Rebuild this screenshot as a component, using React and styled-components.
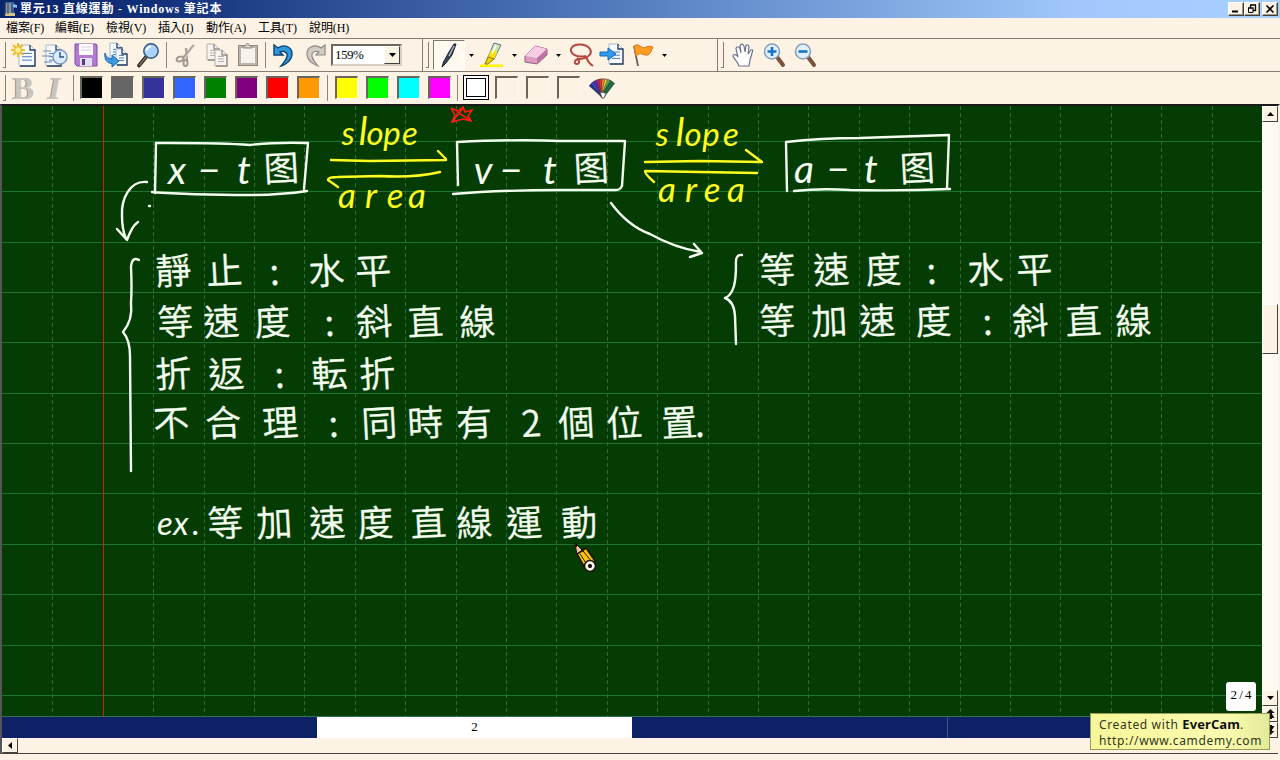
import React from "react";
import styled, { createGlobalStyle } from "styled-components";

const Global = createGlobalStyle`
  body { margin: 0; background: #fdf3e4; overflow: hidden; }
  * { box-sizing: border-box; }
`;

const uiFont = `"Liberation Serif", "Noto Sans CJK TC", serif`;

const Window = styled.div`
  position: relative;
  width: 1280px;
  height: 760px;
  display: flex;
  flex-direction: column;
  background: #fdf3e4;
  font-family: ${uiFont};
  font-size: 12px;
  color: #000;
  overflow: hidden;
`;

const TitleBar = styled.header`
  height: 18px;
  flex: none;
  display: flex;
  align-items: center;
  padding: 0 2px 1px 3px;
  background: linear-gradient(90deg, #0a246a 0%, #12307a 12%, #5a84c4 52%, #a0c8fc 84%, #a8d0ff 100%);
  color: #fff;
`;

const Title = styled.h1`
  flex: 1;
  margin: 1px 0 0 2px;
  font-size: 12px;
  line-height: 17px;
  font-weight: bold;
  letter-spacing: 0.8px;
  white-space: pre;
`;

const CaptionButton = styled.button`
  width: 16px;
  height: 14px;
  padding: 0;
  margin-left: ${(p) => (p.$gap ? "2px" : "0")};
  display: flex;
  align-items: center;
  justify-content: center;
  background: #fdf3e4;
  border: 1px solid;
  border-color: #fff #404040 #404040 #fff;
  box-shadow: inset -1px -1px 0 #9d968a;
`;

const MenuBar = styled.nav`
  height: 20px;
  flex: none;
  display: flex;
  align-items: center;
  padding-left: 6px;
`;

const MenuItem = styled.span`
  width: ${(p) => p.$w}px;
  font-size: 12px;
  line-height: 20px;
  letter-spacing: -0.1px;
  white-space: nowrap;
`;

const Bar = styled.div`
  height: 33px;
  flex: none;
  display: flex;
  align-items: stretch;
  border-top: 1px solid #857d74;
`;

const Band = styled.div`
  width: ${(p) => p.$w || "auto"};
  flex: ${(p) => (p.$w ? "none" : 1)};
  display: flex;
  align-items: center;
  padding-left: 3px;
  border-right: ${(p) => (p.$edge ? "1px solid #857d74" : "0")};
`;

const Grip = styled.i`
  width: 3px;
  height: 26px;
  flex: none;
  margin-right: ${(p) => p.$after || 2}px;
  border-right: 1px solid #857d74;
  border-bottom: 1px solid #857d74;
`;

const Divider = styled.i`
  width: 1px;
  height: 26px;
  flex: none;
  margin: 0 ${(p) => p.$after ?? 3}px 0 ${(p) => p.$before ?? 3}px;
  background: #8d857b;
`;

const Tool = styled.button`
  width: ${(p) => p.$w || 31}px;
  height: 30px;
  flex: none;
  padding: 0;
  display: flex;
  align-items: center;
  justify-content: center;
  background: ${(p) => (p.$pressed ? "#fff9f0" : "none")};
  border: ${(p) => (p.$pressed ? "1px solid" : "0")};
  border-color: #80786e #fff #fff #80786e;
`;

const Zoom = styled.div`
  width: 71px;
  height: 22px;
  margin: 0 0 1px 1px;
  display: flex;
  justify-content: space-between;
  background: #fff;
  border: 2px solid;
  border-color: #6f6860 #d9d0c3 #d9d0c3 #6f6860;
  font-size: 13px;
  line-height: 18px;
  letter-spacing: -0.5px;
  padding-left: 2px;
`;

const ZoomArrow = styled.span`
  width: 16px;
  display: flex;
  align-items: center;
  justify-content: center;
  background: #fdf3e4;
  border: 1px solid;
  border-color: #fff #404040 #404040 #fff;
`;

const Letter = styled.b`
  width: ${(p) => p.$w}px;
  text-align: center;
  font-size: 32px;
  line-height: 30px;
  font-style: ${(p) => (p.$italic ? "italic" : "normal")};
  color: #c9c5be;
  text-shadow: -1px 0 #96918a;
`;

const PaletteRow = styled.div`
  display: flex;
  align-items: center;
  padding-left: 3px;
`;

const Swatch = styled.button`
  width: 23px;
  height: 23px;
  flex: none;
  margin: 0 8px 2px 0;
  padding: 0;
  background: ${(p) => p.$color};
  border: solid;
  border-width: 2px 1px 1px 2px;
  border-color: #6b645c #fff8ec #fff8ec #6b645c;
`;

const PickedSwatch = styled.button`
  width: 26px;
  height: 25px;
  flex: none;
  margin: 0 6px 1px 0;
  padding: 0;
  background: #fff;
  border: 4px double #000;
`;

const Workspace = styled.main`
  height: 650px;
  flex: none;
  display: grid;
  grid-template-columns: 1260px 16px;
  grid-template-rows: 611px 21px 16px;
  border: solid;
  border-width: 2px 2px 0 2px;
  border-color: #1a1a1a #fdf3e4 #555 #555;
`;

const Board = styled.svg`
  display: block;
  width: 1260px;
  height: 611px;
  background: #043c04;
`;

const Pages = styled.div`
  display: flex;
  background: #0e2167;
`;

const PageTab = styled.div`
  width: ${(p) => p.$w}px;
  background: ${(p) => (p.$active ? "#fff" : "#0e2167")};
  border-right: ${(p) => (p.$line ? "1px solid #3c5490" : "0")};
  text-align: center;
  line-height: 20px;
  font-size: 13px;
`;

const VScroll = styled.div`
  grid-column: 2;
  grid-row: 1 / 3;
  display: flex;
  flex-direction: column;
  background: #fffaf1;
`;

const HScroll = styled.div`
  grid-column: 1 / 3;
  display: flex;
  border-bottom: 1px solid #45413c;
`;

const ScrollKey = styled.button`
  width: 16px;
  height: ${(p) => p.$h || 16}px;
  flex: none;
  padding: 0;
  display: flex;
  align-items: center;
  justify-content: center;
  background: #fdf3e4;
  border: 1px solid;
  border-color: #fff #45413c #45413c #fff;
`;

const Track = styled.div`
  height: ${(p) => p.$h}px;
  flex: ${(p) => (p.$h ? "none" : 1)};
`;

const PageBadge = styled.div`
  position: absolute;
  left: 1226px;
  top: 682px;
  width: 30px;
  height: 29px;
  border-radius: 3px;
  background: #fff;
  text-align: center;
  font-size: 13px;
  line-height: 26px;
  word-spacing: -1px;
`;

const Watermark = styled.div`
  position: absolute;
  left: 1090px;
  top: 713px;
  width: 180px;
  height: 37px;
  padding: 3px 0 0 8px;
  background: linear-gradient(90deg, #f6f69a, #fbfbb0 75%, #e2ea98);
  border: 1px solid #9b9d55;
  color: #33361c;
  font-family: "Noto Sans", sans-serif;
  font-size: 12px;
  line-height: 15px;
  white-space: nowrap;
`;

const MarkLine = styled.div`
  height: 16px;
  letter-spacing: 0.65px;
  b { color: #111; font-size: 13px; letter-spacing: 0.1px; }
`;

const Ink = styled.text`
  font-family: ${(p) => (p.$latin ? `"Lato", "Noto Sans CJK SC", sans-serif` : `"Noto Sans CJK TC", "Noto Sans CJK JP", sans-serif`)};
  font-style: ${(p) => (p.$latin ? "italic" : "normal")};
  font-weight: ${(p) => (p.$latin ? 400 : 350)};
  font-size: ${(p) => p.$size || 36}px;
  fill: ${(p) => p.$color || "#f4fff0"};
  stroke: ${(p) => (p.$latin ? "none" : p.$color || "#f4fff0")};
  stroke-width: 0.35px;
  text-anchor: middle;
`;

const TallLetter = styled.tspan`
  font-size: 38px;
`;

const Arrow = ({ d = "down" }) => {
  const pts = { down: "0,0 7,0 3.5,4", up: "0,4 7,4 3.5,0", left: "4,0 4,7 0,3.5" }[d];
  return <svg width={d === "left" ? 4 : 7} height={d === "left" ? 7 : 4}><polygon points={pts} fill="#000" /></svg>;
};

const SmallArrow = () => <svg width="5" height="3"><polygon points="0,0 5,0 2.5,3" fill="#000" /></svg>;

const DoubleArrow = ({ up }) => (
  <svg width="9" height="10" viewBox="0 0 9 10">
    <g transform={up ? "" : "rotate(180 4.5 5)"}>
      <path d="M4.5 0L8.5 4H6V5L8.5 9H6V10H3V9H.5L3 5V4H.5z" fill="#111" />
    </g>
  </svg>
);

const Glyph = ({ children }) => <svg width="26" height="26" viewBox="0 0 26 26" fill="none">{children}</svg>;

const Sheet = ({ x = 0, y = 0, w = 14, h = 20, gray }) => (
  <g transform={`translate(${x} ${y})`}>
    <path d={`M0 0H${w - 5}L${w} 5V${h}H0z`} fill={gray ? "#f7f4ef" : "#f5faff"} stroke={gray ? "#b5afa7" : "#a9b9ce"} />
    <path d={`M${w - 5} 0V5H${w}V${h}H1`} stroke={gray ? "#928c84" : "#26395f"} strokeWidth="1.3" />
    <path d={`M3 ${h * 0.4}H${w - 3}M3 ${h * 0.56}H${w - 3}M3 ${h * 0.72}H${w - 3}`} stroke={gray ? "#b5afa7" : "#5479b8"} />
  </g>
);

const icons = {
  fresh: <Glyph><Sheet x={8} y={3} w={16} h={21} /><path d="M7 1V15M0 8H14M2 3L12 13M12 3L2 13" stroke="#f2bd22" strokeWidth="2" /><circle cx="7" cy="8" r="3.4" fill="#fff08a" stroke="#e7ae1a" /></Glyph>,
  history: <Glyph><Sheet x={4} y={3} w={15} h={21} /><path d="M1 9H9M0 14H9M2 20H10" stroke="#7289a8" /><circle cx="18" cy="15" r="7" fill="#dcecff" stroke="#7f9cc4" strokeWidth="1.6" /><path d="M18 10V15H22" stroke="#294a80" strokeWidth="1.4" /></Glyph>,
  save: <Glyph><path d="M2 2H23L24 3V24H4L2 22z" fill="#b47ad6" stroke="#7d4da6" /><path d="M6 2H20V13H6z" fill="#fff" /><path d="M8 5H18M8 8H18" stroke="#d5cade" /><path d="M7 16H19V24H7z" fill="#e4dfec" /><path d="M9 17H12V23H9z" fill="#5c3485" /></Glyph>,
  send: <Glyph><Sheet x={6} y={1} w={12} h={16} /><Sheet x={12} y={7} w={11} h={16} /><path d="M1 11C2 15 5 17 8 17V13L15 19L8 25V21.5C3 21.5 0 17 1 11z" fill="#3f9ae0" stroke="#176aac" /></Glyph>,
  find: <Glyph><path d="M11 15L4 23.5" stroke="#30261f" strokeWidth="3.6" strokeLinecap="round" /><path d="M11 15L4 23.5" stroke="#8b7a6b" strokeWidth="1.2" /><circle cx="16" cy="9" r="7.2" fill="#a9d3fa" stroke="#37557d" strokeWidth="1.5" /><path d="M11.5 9A5 5 0 0 1 16 4.5" stroke="#fff" strokeWidth="2" /></Glyph>,
  cut: <Glyph><path d="M21 3L10 16M13 6L14 19" stroke="#aaa49c" strokeWidth="2.4" /><path d="M22 3L12 16" stroke="#e2ddd5" /><ellipse cx="7" cy="17" rx="3.5" ry="2.3" stroke="#9f9991" strokeWidth="2" transform="rotate(-20 7 17)" /><ellipse cx="12.5" cy="21" rx="2" ry="3" stroke="#9f9991" strokeWidth="2" /></Glyph>,
  copy: <Glyph><Sheet x={3} y={2} w={12} h={16} gray /><Sheet x={11} y={8} w={12} h={16} gray /></Glyph>,
  paste: <Glyph><rect x="3.5" y="3.5" width="19" height="20" fill="#bcb6ad" stroke="#8f8981" /><rect x="6" y="6" width="14" height="15" fill="#f6f3ee" /><path d="M8 6V4H10L12.5 1L15 4H17V6z" fill="#d3cec6" stroke="#8f8981" /></Glyph>,
  undo: <Glyph><path d="M7 6C14 1 22 6 21 13C20 19 16 22 10 24C14 19 17 16 16 12C15 9 11 9 9 10L12 13L3 13L3 3L7 6z" fill="#2f97dc" stroke="#0b4374" strokeWidth="1.4" /></Glyph>,
  redo: <Glyph><path d="M19 6C12 1 4 6 5 13C6 19 10 22 16 24C12 19 9 16 10 12C11 9 15 9 17 10L14 13L23 13L23 3L19 6z" fill="#d1ccc5" stroke="#8f8982" strokeWidth="1.2" /></Glyph>,
  pen: <Glyph><path d="M20 2L16 13L10 21L6 25L7.5 20L13 10L18 2z" fill="#3c4a58" stroke="#17202c" /><path d="M18 4L13 14" stroke="#b3c0cc" strokeWidth="1.3" /></Glyph>,
  marker: <Glyph><path d="M0 22.5H23V25H0z" fill="#fff200" /><path d="M14 1L21 3L14 17L8 15z" fill="#cfe6a8" stroke="#58769a" /><path d="M11 8L17.5 10L14 17L8 15z" fill="#ffe000" /><path d="M8 15L14 17L8 22L5 22z" fill="#f2d200" stroke="#887500" /><path d="M16 3L12 12" stroke="#fff" strokeWidth="1.5" /></Glyph>,
  eraser: <Glyph><path d="M2 14L12 4L24 7V13L14 22L2 20z" fill="#dc9cc4" stroke="#8f5e80" /><path d="M2 14L12 4L24 7L14 16z" fill="#f7cde3" /><path d="M14 16V22L24 13V7z" fill="#bf73a4" /></Glyph>,
  lasso: <Glyph><path d="M18 14C9 16 2 12 3 7C5 1 18 1 22 7C25 12 19 17 11 17C7 17 5 22 9 22C12 21 12 18 9 16M18 14C19 19 22 22 25 24" stroke="#b5483f" strokeWidth="2" /></Glyph>,
  insert: <Glyph><Sheet x={10} y={2} w={14} h={20} /><path d="M1 10H9V6L17 12L9 18V14H1z" fill="#2f9aef" stroke="#1768b0" /></Glyph>,
  flag: <Glyph><path d="M4 4L8 24" stroke="#6d6258" strokeWidth="1.8" /><path d="M4 4C9 0 12 8 16 5C19 4 20 4 23 5C21 9 21 11 18 13C13 14 11 9 6 14z" fill="#ff9c22" stroke="#d97810" /></Glyph>,
  hand: <Glyph><path d="M9 24C8 20 4 17 3 14C3 12 6 12 8 15L6 7C6 4 9 4 10 7L11 11L10 4C11 1 13 2 14 4L15 10L16 4C17 2 19 3 19 5L18 12L21 8C23 7 23 9 22 11L20 18L19 24z" fill="#fff" stroke="#6d7492" strokeWidth="1.2" /></Glyph>,
};

const ZoomGlyph = ({ plus }) => (
  <Glyph>
    <path d="M16 15L22 23" stroke="#7c523c" strokeWidth="4" strokeLinecap="round" />
    <circle cx="11" cy="9.5" r="7.5" fill="#dff1ff" stroke="#8a9fba" strokeWidth="1.6" />
    <path d={plus ? "M6.5 9.5H15.5M11 5V14" : "M6.5 9.5H15.5"} stroke="#1971ca" strokeWidth="2.6" />
  </Glyph>
);

const hues = ["#2b2f86", "#2e4fd6", "#5f2fa0", "#b02483", "#e0352d", "#f0842c", "#e5cc3a", "#5fab3f", "#1d6a4a"];

const Fan = () => (
  <Glyph>
    {hues.map((c, i) => (
      <path key={c} d="M12.4 22L11 4H16L15.4 22z" fill={c} stroke="#27232b" strokeWidth=".4" transform={`rotate(${-44 + i * 10} 14 21)`} />
    ))}
    <path d="M11 17L17 18L15 23H13z" fill="#fff" stroke="#444" strokeWidth=".8" />
  </Glyph>
);

const menu = [["檔案(F)", 49], ["編輯(E)", 51], ["檢視(V)", 52], ["插入(I)", 48], ["動作(A)", 52], ["工具(T)", 51], ["說明(H)", 50]];
const darks = ["#000000", "#666666", "#333399", "#3366ff", "#008000", "#800080", "#ff0000", "#ff9900"];
const brights = ["#ffff00", "#00ff00", "#00ffff", "#ff00ff"];

const notes = [
  { t: "靜止:水平", x: [174, 225, 275, 327, 374], y: 285 },
  { t: "等速度:斜直線", x: [176, 222, 273, 330, 375, 426, 478], y: 336 },
  { t: "折返:転折", x: [174, 227, 280, 330, 378], y: 388 },
  { t: "不合理:同時有2個位置.", x: [172, 224, 281, 334, 380, 426, 475, 532, 577, 625, 680, 700], y: 437 },
  { t: "等加速度直線運動", x: [226, 275, 328, 376, 429, 475, 525, 580], y: 537 },
  { t: "等速度:水平", x: [778, 832, 884, 932, 986, 1035], y: 284 },
  { t: "等加速度:斜直線", x: [778, 830, 878, 934, 988, 1031, 1084, 1134], y: 335 },
  { t: "图", x: [282], y: 182, size: 35 },
  { t: "图", x: [592], y: 182, size: 35 },
  { t: "图", x: [918], y: 182, size: 35 },
];

const labels = [
  { t: "x−t", x: [177, 209, 244], y: 184 },
  { t: "v−t", x: [483, 511, 550], y: 184 },
  { t: "a−t", x: [804, 838, 871], y: 183 },
  { t: "ex.", x: [165, 181, 196], y: 535, size: 33 },
];

const yellow = "#ffff20";
const relations = [
  { t: "slope", x: [348, 363, 375, 392, 410], y: 145, size: 33 },
  { t: "area", x: [347, 371, 395, 417], y: 208 },
  { t: "slope", x: [662, 680, 693, 711, 731], y: 146, size: 33 },
  { t: "area", x: [667, 691, 712, 736], y: 202 },
];

const hLines = Array.from({ length: 12 }, (_, i) => Math.round(141 + i * 50.35) + 0.5);
const vLines = Array.from({ length: 24 }, (_, i) => Math.round(52.4 + i * 50.4) + 0.5).filter((x) => Math.abs(x - 103) > 3);

const letters = (text) => [...text].map((c, i) => (c === "l" ? <TallLetter key={i}>{c}</TallLetter> : c));

function Blackboard() {
  return (
    <Board viewBox="2 106 1260 611">
      <g stroke="#1b7430">{hLines.map((y) => <path key={y} d={`M2 ${y}H1262`} />)}</g>
      <g stroke="#2b6c34" strokeDasharray="4 3">{vLines.map((x) => <path key={x} d={`M${x} 106V717`} />)}</g>
      <rect x="103" y="106" width="1" height="611" fill="#e01414" />
      <path d="M2 716.5H1262" stroke="#2e7256" />

      {notes.map((n, i) => <Ink key={i} $size={n.size} x={n.x.join(" ")} y={n.y} rotate="-3">{n.t}</Ink>)}
      {labels.map((n, i) => <Ink key={i} $latin $size={n.size || 39} x={n.x.join(" ")} y={n.y}>{n.t}</Ink>)}
      {relations.map((n, i) => <Ink key={i} $latin $size={n.size || 35} $color={yellow} x={n.x.join(" ")} y={n.y}>{letters(n.t)}</Ink>)}

      <g fill="none" stroke="#f4fff0" strokeWidth="2.4" strokeLinecap="round" strokeLinejoin="round">
        <path d="M155 193L156 143L170 143Q225 143 250 145Q275 142 308 143L304 189M152 192Q190 195 250 195Q280 195 307 191" />
        <path d="M458 185L457 142Q520 139 560 141L625 141L622 186Q620 190 616 190L560 190Q500 190 453 194" />
        <path d="M787 191L786 142Q820 138 860 138L949 135L947 188M794 191Q820 188 850 190Q900 191 950 189" />
        <path d="M147 182C130 180 121 199 122 216Q122 229 126 239M117 229L127 240Q132 226 138 222" />
        <path d="M611 203Q628 226 650 234Q675 248 701 252M694 244L702 253L690 257" />
        <path d="M139 260Q132 256 131 267Q132 288 131 303Q133 320 123 332Q130 340 130 356L131 471" />
        <path d="M742 255Q735 254 736 265Q736 278 734 286Q731 296 725 298Q734 301 735 316L736 344" />
        <path d="M149 206h1" />
      </g>
      <g fill="none" stroke={yellow} strokeWidth="2.4" strokeLinecap="round" strokeLinejoin="round">
        <path d="M331 160L370 161L446 160M438 151L446 159M440 172Q415 178 380 176L338 177Q328 177 328 180L338 187" />
        <path d="M645 162L700 161L762 162M746 150L762 162M757 173L700 172L645 171Q644 173 654 182" />
      </g>
      <path d="M451 108L458 111L463 107L465 112L472 110L468 116L471 121L463 119L452 122L455 115L451 108M457 112L470 120M463 108L453 121" fill="none" stroke="#ff1c12" strokeWidth="1.6" />

      <g stroke="#1c180c" strokeLinejoin="round">
        <path d="M575 543L577 555L582 550z" fill="#f2c49f" />
        <path d="M575 543L576 547L578 545z" fill="#111" />
        <path d="M577 554L585 568L595 561L586 548L582 551z" fill="#ffc50d" strokeWidth="1.6" />
        <path d="M580 554L588 566M583 551L592 562" />
        <circle cx="590" cy="566" r="5.5" fill="#fff8e6" strokeWidth="1.6" />
        <circle cx="590" cy="566" r="1.7" fill="#111" />
      </g>
    </Board>
  );
}

function Palette() {
  return (
    <PaletteRow>
      {darks.map((c) => <Swatch key={c} $color={c} />)}
      <Divider $before={-1} $after={7} />
      {brights.map((c) => <Swatch key={c} $color={c} />)}
      <Divider $before={-2} $after={5} />
      <PickedSwatch />
      {[0, 1, 2].map((i) => <Swatch key={i} $color="#fdf3e4" />)}
      <Tool $w={28}><Fan /></Tool>
    </PaletteRow>
  );
}

export default function App() {
  return (
    <Window>
      <Global />
      <TitleBar>
        <svg width="15" height="16" viewBox="0 0 15 16"><path d="M2 1H11V14H2z" fill="#3c5b97" /><path d="M3 2H8V14H3z" fill="#8f9298" /><path d="M2 12H12V15H2z" fill="#d6c486" /><path d="M10 3L14 4V7L10 6z" fill="#80c0ef" /><path d="M2 1V14M5 2V13" stroke="#29446f" /></svg>
        <Title>單元13 直線運動 - Windows 筆記本</Title>
        <CaptionButton aria-label="Minimize"><svg width="10" height="8"><path d="M1 6.5H7" stroke="#000" strokeWidth="2" /></svg></CaptionButton>
        <CaptionButton aria-label="Restore"><svg width="10" height="10" fill="none" stroke="#000"><path d="M3 1H9M3.5 1V4M8.5 1V6.5H6M1 4H6.5" strokeWidth="1.3" /><path d="M1.5 4V8.5H6V4" /></svg></CaptionButton>
        <CaptionButton $gap aria-label="Close"><svg width="10" height="8"><path d="M1.5 .5L8.5 7.5M8.5 .5L1.5 7.5" stroke="#000" strokeWidth="1.6" /></svg></CaptionButton>
      </TitleBar>
      <MenuBar>{menu.map(([t, w]) => <MenuItem key={t} $w={w}>{t}</MenuItem>)}</MenuBar>

      <Bar>
        <Band $w="423px" $edge>
          <Grip />
          {["fresh", "history", "save", "send", "find"].map((k) => <Tool key={k}>{icons[k]}</Tool>)}
          <Divider />
          {["cut", "copy", "paste"].map((k) => <Tool key={k}>{icons[k]}</Tool>)}
          <Divider $before={2} $after={2} />
          {["undo", "redo"].map((k) => <Tool key={k}>{icons[k]}</Tool>)}
          <Zoom><span>159%</span><ZoomArrow><Arrow /></ZoomArrow></Zoom>
        </Band>
        <Band $w="295px" $edge>
          <Grip $after={4} />
          <Tool $pressed $w={32}>{icons.pen}</Tool>
          <Tool $w={13}><SmallArrow /></Tool>
          <Tool $w={30}>{icons.marker}</Tool>
          <Tool $w={13}><SmallArrow /></Tool>
          <Tool $w={30}>{icons.eraser}</Tool>
          <Tool $w={14}><SmallArrow /></Tool>
          <Tool>{icons.lasso}</Tool>
          <Tool>{icons.insert}</Tool>
          <Tool>{icons.flag}</Tool>
          <Tool $w={13}><SmallArrow /></Tool>
        </Band>
        <Band>
          <Grip $after={3} />
          <Tool>{icons.hand}</Tool>
          <Tool><ZoomGlyph plus /></Tool>
          <Tool><ZoomGlyph /></Tool>
        </Band>
      </Bar>
      <Bar>
        <Band>
          <Grip />
          <Letter $w={31}>B</Letter>
          <Letter $w={31} $italic>I</Letter>
          <Divider />
          <Palette />
        </Band>
      </Bar>

      <Workspace>
        <Blackboard />
        <VScroll>
          <ScrollKey><Arrow d="up" /></ScrollKey>
          <Track $h={182} />
          <ScrollKey as="div" $h={50} />
          <Track />
          <ScrollKey><Arrow /></ScrollKey>
          <ScrollKey><DoubleArrow up /></ScrollKey>
          <ScrollKey><DoubleArrow /></ScrollKey>
        </VScroll>
        <Pages>
          <PageTab $w={315} />
          <PageTab $w={315} $active>2</PageTab>
          <PageTab $w={316} $line />
          <PageTab $w={314} />
        </Pages>
        <HScroll>
          <ScrollKey $h={15}><Arrow d="left" /></ScrollKey>
          <Track />
        </HScroll>
      </Workspace>

      <PageBadge>2 / 4</PageBadge>
      <Watermark>
        <MarkLine>Created with <b>EverCam</b>.</MarkLine>
        <MarkLine>http://www.camdemy.com</MarkLine>
      </Watermark>
    </Window>
  );
}
